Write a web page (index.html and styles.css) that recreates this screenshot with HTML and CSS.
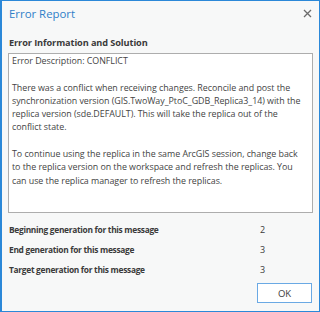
FILE: index.html
```html
<!DOCTYPE html>
<html lang="en">
<head>
  <title>Error Report</title>
  <meta charset="UTF-8">
  <link rel="stylesheet" href="styles.css">
</head>
<body>
  <div class="dialog">
    <div class="dialog-header">
      <span class="dialog-title">Error Report</span>
      <button class="close-button" aria-label="Close">
        <svg width="9" height="9" viewBox="0 0 9 9"><path d="M1 1 L8 8 M8 1 L1 8" stroke="#6b6b6b" stroke-width="1.3" fill="none"/></svg>
      </button>
    </div>

    <div class="section-title">Error Information and Solution</div>
    <div class="message-box">
      <p>Error Description: CONFLICT</p>
      <p>There was a conflict when receiving changes. Reconcile and post the<br>
        synchronization version (GIS.TwoWay_PtoC_GDB_Replica3_14) with the<br>
        replica version (sde.DEFAULT). This will take the replica out of the<br>
        conflict state.</p>
      <p>To continue using the replica in the same ArcGIS session, change back<br>
        to the replica version on the workspace and refresh the replicas. You<br>
        can use the replica manager to refresh the replicas.</p>
    </div>

    <div class="info-rows">
      <div class="info-row"><span class="label">Beginning generation for this message</span><span class="value">2</span></div>
      <div class="info-row"><span class="label">End generation for this message</span><span class="value">3</span></div>
      <div class="info-row"><span class="label">Target generation for this message</span><span class="value">3</span></div>
    </div>

    <div class="dialog-footer">
      <button class="ok-button">OK</button>
    </div>
  </div>
</body>
</html>
```

FILE: styles.css
```css
:root {
  --bg-color: #f7f8f8;
  --border-blue: #2b88d8;
  --title-blue: #2f7fc8;
  --text-color: #3a3a3a;
  --box-border: #adadad;
}
html, body {
  margin: 0;
  padding: 0;
}
body {
  font-family: 'Open Sans', sans-serif;
  color: var(--text-color);
  background-color: var(--bg-color);
}
.dialog {
  width: 320px;
  height: 312px;
  box-sizing: border-box;
  border: 1px solid var(--border-blue);
  border-left-width: 2px;
  background-color: var(--bg-color);
  display: flex;
  flex-direction: column;
}
.dialog-header {
  display: flex;
  align-items: center;
  justify-content: space-between;
  height: 24px;
  padding: 0 6px 0 7px;
}
.dialog-title {
  font-size: 11.4px;
  color: var(--title-blue);
}
.close-button {
  border: none;
  background: none;
  padding: 0;
  width: 12px;
  height: 12px;
  display: flex;
  align-items: center;
  justify-content: center;
}
.section-title {
  font-size: 9.2px;
  font-weight: 700;
  letter-spacing: -0.1px;
  margin: 11px 0 0 7px;
  line-height: 14px;
}
.message-box {
  margin: 3px 6px 0 6px;
  height: 160px;
  box-sizing: border-box;
  border: 1px solid var(--box-border);
  background-color: #fff;
  padding: 0 0 0 3px;
  font-size: 8.9px;
  letter-spacing: -0.04px;
  line-height: 13.3px;
  color: #444;
}
.message-box p {
  margin: 0 0 13.3px 0;
}
.info-rows {
  margin: 6px 0 0 7px;
}
.info-row {
  display: flex;
  height: 20px;
  align-items: center;
  font-size: 9px;
}
.label {
  font-weight: 700;
  font-size: 8.4px;
  letter-spacing: -0.3px;
  width: 251px;
}
.dialog-footer {
  display: flex;
  justify-content: flex-end;
  padding: 4px 7px 0 0;
}
.ok-button {
  width: 55px;
  height: 20px;
  border: 1px solid #6aa9e4;
  background-color: #fff;
  font-family: 'Open Sans', sans-serif;
  font-size: 9.5px;
  color: var(--text-color);
  padding: 0;
}
```
